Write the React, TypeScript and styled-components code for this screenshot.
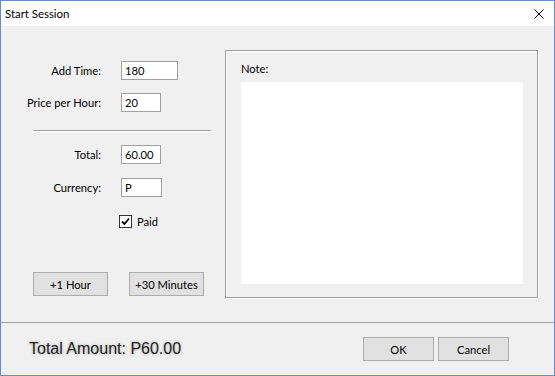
import React from "react";
import styled, { createGlobalStyle } from "styled-components";

const GlobalStyle = createGlobalStyle`
  html, body {
    margin: 0;
    padding: 0;
    background: #f0f0f0;
  }
`;

const Window = styled.div`
  width: 555px;
  height: 376px;
  box-sizing: border-box;
  border: 1px solid #6b8bc8;
  background: #f0f0f0;
  display: flex;
  flex-direction: column;
  font-family: "Segoe UI", Lato, "Noto Sans", sans-serif;
  font-size: 11.2px;
  color: #000;
`;

const TitleBar = styled.div`
  height: 25px;
  flex: none;
  background: #fff;
  display: flex;
  align-items: center;
  justify-content: space-between;
  padding: 0 10px 0 4px;
`;

const Title = styled.span`
  font-size: 11.4px;
`;

const Body = styled.div`
  height: 296px;
  flex: none;
  display: flex;
  align-items: flex-start;
`;

const LeftPane = styled.div`
  width: 224px;
  padding-top: 35px;
  display: flex;
  flex-direction: column;
`;

const FormRow = styled.div<{ top: number }>`
  display: grid;
  grid-template-columns: 100px auto;
  column-gap: 20px;
  align-items: center;
  margin-top: ${(p) => p.top}px;
`;

const Label = styled.label`
  text-align: right;
  white-space: nowrap;
  color: #000;
`;

const TextBox = styled.div<{ w: number }>`
  width: ${(p) => p.w}px;
  height: 19px;
  box-sizing: border-box;
  background: #fff;
  border: 1px solid #a0a0a0;
  padding-left: 3px;
  line-height: 17px;
`;

const Separator = styled.div`
  margin: 18px 0 0 32px;
  width: 178px;
  height: 1px;
  background: #a0a0a0;
  box-shadow: 0 1px 0 #fff;
`;

const CheckRow = styled.div`
  margin: 18px 0 0 118px;
  display: flex;
  align-items: center;
  gap: 5px;
`;

const CheckBox = styled.span`
  width: 13px;
  height: 13px;
  box-sizing: border-box;
  border: 1px solid #333;
  background: #fff;
  display: flex;
  align-items: center;
  justify-content: center;
`;

const ButtonRow = styled.div`
  margin: 44px 0 0 32px;
  display: flex;
  gap: 21px;
`;

const Button = styled.button<{ w: number }>`
  width: ${(p) => p.w}px;
  height: 24px;
  box-sizing: border-box;
  border: 1px solid #adadad;
  background: #e1e1e1;
  font-family: inherit;
  font-size: 11.2px;
  color: #000;
  padding: 0;
`;

const GroupBox = styled.div`
  margin-top: 24px;
  width: 313px;
  height: 248px;
  box-sizing: border-box;
  border: 1px solid #a0a0a0;
  box-shadow: 1px 1px 0 #fff, inset 1px 1px 0 #fff;
  padding: 10px 14px 13px 15px;
  display: flex;
  flex-direction: column;
`;

const NoteLabel = styled.div`
  line-height: 16px;
`;

const NoteArea = styled.div`
  margin-top: 5px;
  flex: 1;
  background: #fff;
`;

const Footer = styled.div`
  flex: 1;
  border-top: 1px solid #a0a0a0;
  display: flex;
  align-items: center;
  justify-content: space-between;
  padding: 0 45px 0 28px;
`;

const TotalAmount = styled.span`
  font-family: "Liberation Sans", Arial, sans-serif;
  font-size: 16px;
  color: #222;
  text-shadow: 0 0 3px rgba(0, 0, 0, 0.28);
`;

const FooterButtons = styled.div`
  display: flex;
  gap: 4px;
`;

function CloseIcon() {
  return (
    <svg width="10" height="10" viewBox="0 0 10 10">
      <path d="M0.5 0.5 L9.5 9.5 M9.5 0.5 L0.5 9.5" stroke="#000" strokeWidth="1" />
    </svg>
  );
}

function CheckMark() {
  return (
    <svg width="9" height="9" viewBox="0 0 9 9">
      <path d="M1 4.5 L3.5 7 L8 1.5" stroke="#000" strokeWidth="1.8" fill="none" />
    </svg>
  );
}

export default function App() {
  return (
    <>
      <GlobalStyle />
      <Window>
        <TitleBar>
          <Title>Start Session</Title>
          <CloseIcon />
        </TitleBar>
        <Body>
          <LeftPane>
            <FormRow top={0}>
              <Label>Add Time:</Label>
              <TextBox w={57}>180</TextBox>
            </FormRow>
            <FormRow top={13}>
              <Label>Price per Hour:</Label>
              <TextBox w={40}>20</TextBox>
            </FormRow>
            <Separator />
            <FormRow top={14}>
              <Label>Total:</Label>
              <TextBox w={40}>60.00</TextBox>
            </FormRow>
            <FormRow top={14}>
              <Label>Currency:</Label>
              <TextBox w={41}>P</TextBox>
            </FormRow>
            <CheckRow>
              <CheckBox>
                <CheckMark />
              </CheckBox>
              <span>Paid</span>
            </CheckRow>
            <ButtonRow>
              <Button w={75}>+1 Hour</Button>
              <Button w={75}>+30 Minutes</Button>
            </ButtonRow>
          </LeftPane>
          <GroupBox>
            <NoteLabel>Note:</NoteLabel>
            <NoteArea />
          </GroupBox>
        </Body>
        <Footer>
          <TotalAmount>Total Amount: P60.00</TotalAmount>
          <FooterButtons>
            <Button w={71}>OK</Button>
            <Button w={71}>Cancel</Button>
          </FooterButtons>
        </Footer>
      </Window>
    </>
  );
}
